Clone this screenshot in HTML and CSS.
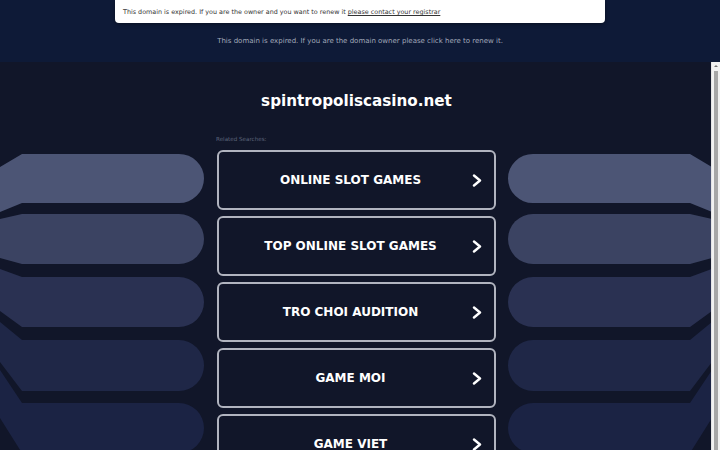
FILE: index.html
```html
<!DOCTYPE html>
<html lang="en">
<head>
    <meta charset="UTF-8">
    <meta name="viewport" content="width=device-width, initial-scale=1.0">
    <title>spintropoliscasino.net</title>
    <link rel="stylesheet" href="styles.css">
</head>
<body>

<div class="header">
    <div class="notice">This domain is expired. If you are the owner and you want to renew it <a href="#">please contact your registrar</a></div>
    <div class="renew">This domain is expired. If you are the domain owner please click here to renew it.</div>
</div>

<div class="frame">
    <div class="main">
        <svg class="side" viewBox="0 0 204 320" width="204" height="320">
            <path fill="#4c5575" d="M0 27 L22 14 H179 A25 24.5 0 0 1 179 63 H22 L0 72 Z"/>
            <path fill="#3b4362" d="M0 79 L22 74 H179 A25 25 0 0 1 179 124 H22 L0 118 Z"/>
            <path fill="#2a3152" d="M0 129 L22 137 H179 A25 25 0 0 1 179 187 H22 L0 171 Z"/>
            <path fill="#1f2747" d="M0 182 L22 200 H179 A25 25.5 0 0 1 179 251 H22 L0 222 Z"/>
            <path fill="#1b2344" d="M0 230 L22 263 H179 A25 25 0 0 1 179 313 H22 L0 278 Z"/>
        </svg>

        <div class="col">
            <h1 class="title">spintropoliscasino.net</h1>
            <div class="related">Related Searches:</div>
            <div class="list">
                <a class="item" href="#"><span>ONLINE SLOT GAMES</span><svg class="chev" viewBox="0 0 10 13"><polyline points="2,1.5 8,6.5 2,11.5"/></svg></a>
                <a class="item" href="#"><span>TOP ONLINE SLOT GAMES</span><svg class="chev" viewBox="0 0 10 13"><polyline points="2,1.5 8,6.5 2,11.5"/></svg></a>
                <a class="item" href="#"><span>TRO CHOI AUDITION</span><svg class="chev" viewBox="0 0 10 13"><polyline points="2,1.5 8,6.5 2,11.5"/></svg></a>
                <a class="item" href="#"><span>GAME MOI</span><svg class="chev" viewBox="0 0 10 13"><polyline points="2,1.5 8,6.5 2,11.5"/></svg></a>
                <a class="item" href="#"><span>GAME VIET</span><svg class="chev" viewBox="0 0 10 13"><polyline points="2,1.5 8,6.5 2,11.5"/></svg></a>
            </div>
        </div>

        <svg class="side flip" viewBox="0 0 204 320" width="204" height="320">
            <path fill="#4c5575" d="M0 27 L22 14 H179 A25 24.5 0 0 1 179 63 H22 L0 72 Z"/>
            <path fill="#3b4362" d="M0 79 L22 74 H179 A25 25 0 0 1 179 124 H22 L0 118 Z"/>
            <path fill="#2a3152" d="M0 129 L22 137 H179 A25 25 0 0 1 179 187 H22 L0 171 Z"/>
            <path fill="#1f2747" d="M0 182 L22 200 H179 A25 25.5 0 0 1 179 251 H22 L0 222 Z"/>
            <path fill="#1b2344" d="M0 230 L22 263 H179 A25 25 0 0 1 179 313 H22 L0 278 Z"/>
        </svg>
    </div>
    <div class="scroll">
        <div class="arrow"></div>
        <div class="thumb"></div>
    </div>
</div>

</body>
</html>
```

FILE: styles.css
```css
html, body {
    margin: 0;
    overflow: hidden;
}
body {
    font-family: 'DejaVu Sans', 'Liberation Sans', sans-serif;
    background: #111629;
    color: #fff;
}
.header {
    height: 62px;
    background: #0e1a37;
    text-align: center;
}
.notice {
    width: 474px;
    margin: 0 auto;
    padding: 7px 8px 6px;
    background: #fff;
    border-radius: 0 0 4px 4px;
    box-shadow: 0 1px 4px rgba(0, 0, 0, 0.4);
    color: #333;
    font-size: 6.4px;
    line-height: 10px;
    text-align: left;
}
.notice a {
    color: #333;
}
.renew {
    margin-top: 13px;
    color: #a2a9ba;
    font-size: 7px;
    line-height: 10px;
}
.frame {
    display: flex;
    height: 420px;
}
.main {
    flex: 1;
    display: flex;
    gap: 13px;
    overflow: hidden;
}
.scroll {
    width: 8px;
    flex: none;
    display: flex;
    flex-direction: column;
    align-items: center;
    background: #f1f1f1;
    border-left: 1px solid #e4e4e4;
}
.arrow {
    margin: 3px 0 4px;
    border-left: 2px solid transparent;
    border-right: 2px solid transparent;
    border-bottom: 2px solid #707070;
}
.thumb {
    flex: 1;
    width: 4px;
    background: #a6a6a6;
}
.side {
    flex: none;
    margin-top: 78px;
}
.flip {
    transform: scaleX(-1);
    margin-left: -1px;
}
.col {
    width: 279px;
    flex: none;
}
.title {
    margin: 28px 0 0;
    font-size: 15.2px;
    line-height: 22px;
    text-align: center;
    font-weight: bold;
}
.related {
    margin: 23px 0 0 -1px;
    font-size: 5.6px;
    line-height: 8px;
    color: #5d6479;
}
.list {
    display: flex;
    flex-direction: column;
    gap: 6px;
    margin-top: 7px;
}
.item {
    display: flex;
    align-items: center;
    height: 56px;
    padding: 0 12px 0 10px;
    border: 2px solid #b1b4bf;
    border-radius: 6px;
    color: #fff;
    text-decoration: none;
}
.item span {
    flex: 1;
    text-align: center;
    font-size: 12px;
    font-weight: bold;
}
.chev {
    width: 10px;
    height: 13px;
    fill: none;
    stroke: #fff;
    stroke-width: 2.4;
    stroke-linecap: round;
    stroke-linejoin: round;
}
```
